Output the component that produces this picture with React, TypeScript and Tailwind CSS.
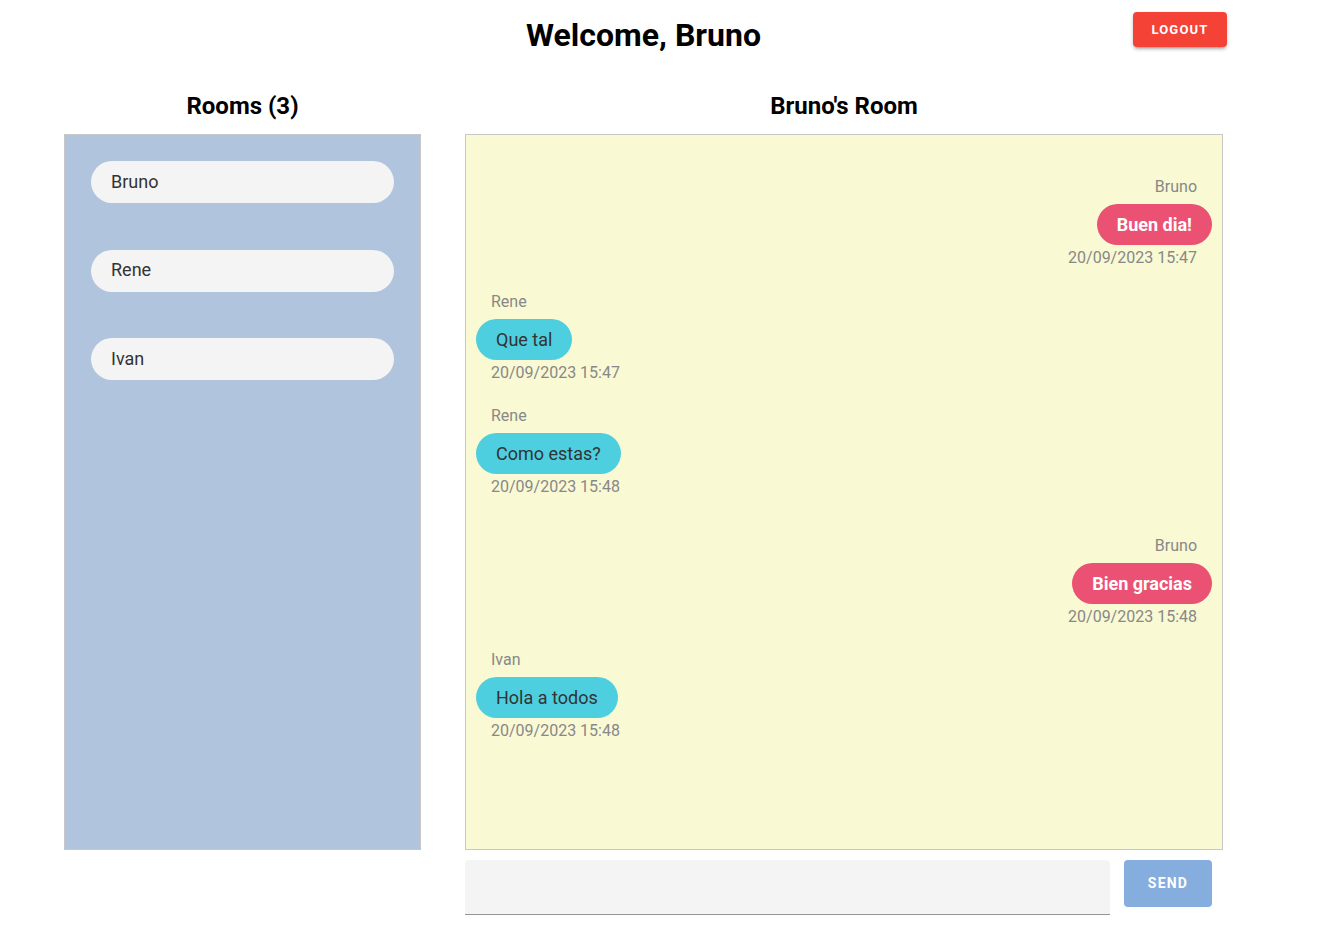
import React from "react";

type Msg = { user: string; text: string; time: string; mine: boolean; gap: number };

const messages: Msg[] = [
  { user: "Bruno", text: "Buen dia!", time: "20/09/2023 15:47", mine: true, gap: 0 },
  { user: "Rene", text: "Que tal", time: "20/09/2023 15:47", mine: false, gap: 24 },
  { user: "Rene", text: "Como estas?", time: "20/09/2023 15:48", mine: false, gap: 23 },
  { user: "Bruno", text: "Bien gracias", time: "20/09/2023 15:48", mine: true, gap: 39 },
  { user: "Ivan", text: "Hola a todos", time: "20/09/2023 15:48", mine: false, gap: 23 },
];

const rooms = ["Bruno", "Rene", "Ivan"];

export default function App() {
  return (
    <div className="min-h-[934px] w-full bg-white" style={{ fontFamily: "Roboto, 'Liberation Sans', sans-serif" }}>
      <div className="ml-[64px] w-[1159px]">
        <div className="relative flex h-[70px] items-center justify-center">
          <h1 className="text-[32px] font-bold leading-none text-black">Welcome, Bruno</h1>
          <button className="absolute right-[-4px] top-[12px] flex h-[35px] w-[94px] items-center justify-center rounded-[4px] bg-[#f44336] text-[13px] font-bold tracking-[1.2px] text-white shadow-[0_3px_3px_-2px_rgba(0,0,0,0.3),0_2px_4px_0_rgba(0,0,0,0.2)]">
            LOGOUT
          </button>
        </div>
        <div className="flex gap-[44px] pt-[20px]">
          <div className="flex w-[357px] flex-col">
            <h2 className="mb-[12px] text-center text-[24px] font-bold leading-[32px] text-black">Rooms (3)</h2>
            <div className="flex h-[716px] flex-col gap-[46.5px] border border-[#c8c8c8] bg-[#b0c4de] px-[26px] pt-[26px]">
              {rooms.map((r) => (
                <div key={r} className="flex h-[42px] items-center rounded-full bg-[#f4f4f4] pb-[2px] pl-[20px] text-[18px] text-[#333]">
                  {r}
                </div>
              ))}
            </div>
          </div>
          <div className="flex w-[758px] flex-col">
            <h2 className="mb-[12px] text-center text-[24px] font-bold leading-[32px] text-black">Bruno's Room</h2>
            <div className="flex h-[716px] flex-col border border-[#c8c8c8] bg-[#f9f9d3] px-[10px] pt-[42px]">
              {messages.map((m, i) => (
                <div
                  key={i}
                  className={`flex flex-col ${m.mine ? "items-end" : "items-start"}`}
                  style={{ marginTop: m.gap }}
                >
                  <div className="px-[15px] text-[16px] leading-[20px] text-[#888]">{m.user}</div>
                  <div
                    className={`mt-[7px] flex h-[41px] items-center rounded-full px-[20px] pb-[1px] text-[18px] ${
                      m.mine ? "bg-[#eb5173] font-bold text-white" : "bg-[#4dcfe0] text-[#333]"
                    }`}
                  >
                    {m.text}
                  </div>
                  <div className="mt-[3px] px-[15px] text-[16px] leading-[20px] text-[#888]">{m.time}</div>
                </div>
              ))}
            </div>
            <div className="mt-[10px] flex items-start gap-[14px]">
              <div className="h-[55px] w-[645px] rounded-t-[4px] border-b border-[#949494] bg-[#f4f4f4]" />
              <button className="flex h-[47px] w-[88px] items-center justify-center rounded-[4px] bg-[#85aede] text-[14px] font-bold tracking-[1.2px] text-white">
                SEND
              </button>
            </div>
          </div>
        </div>
      </div>
    </div>
  );
}
